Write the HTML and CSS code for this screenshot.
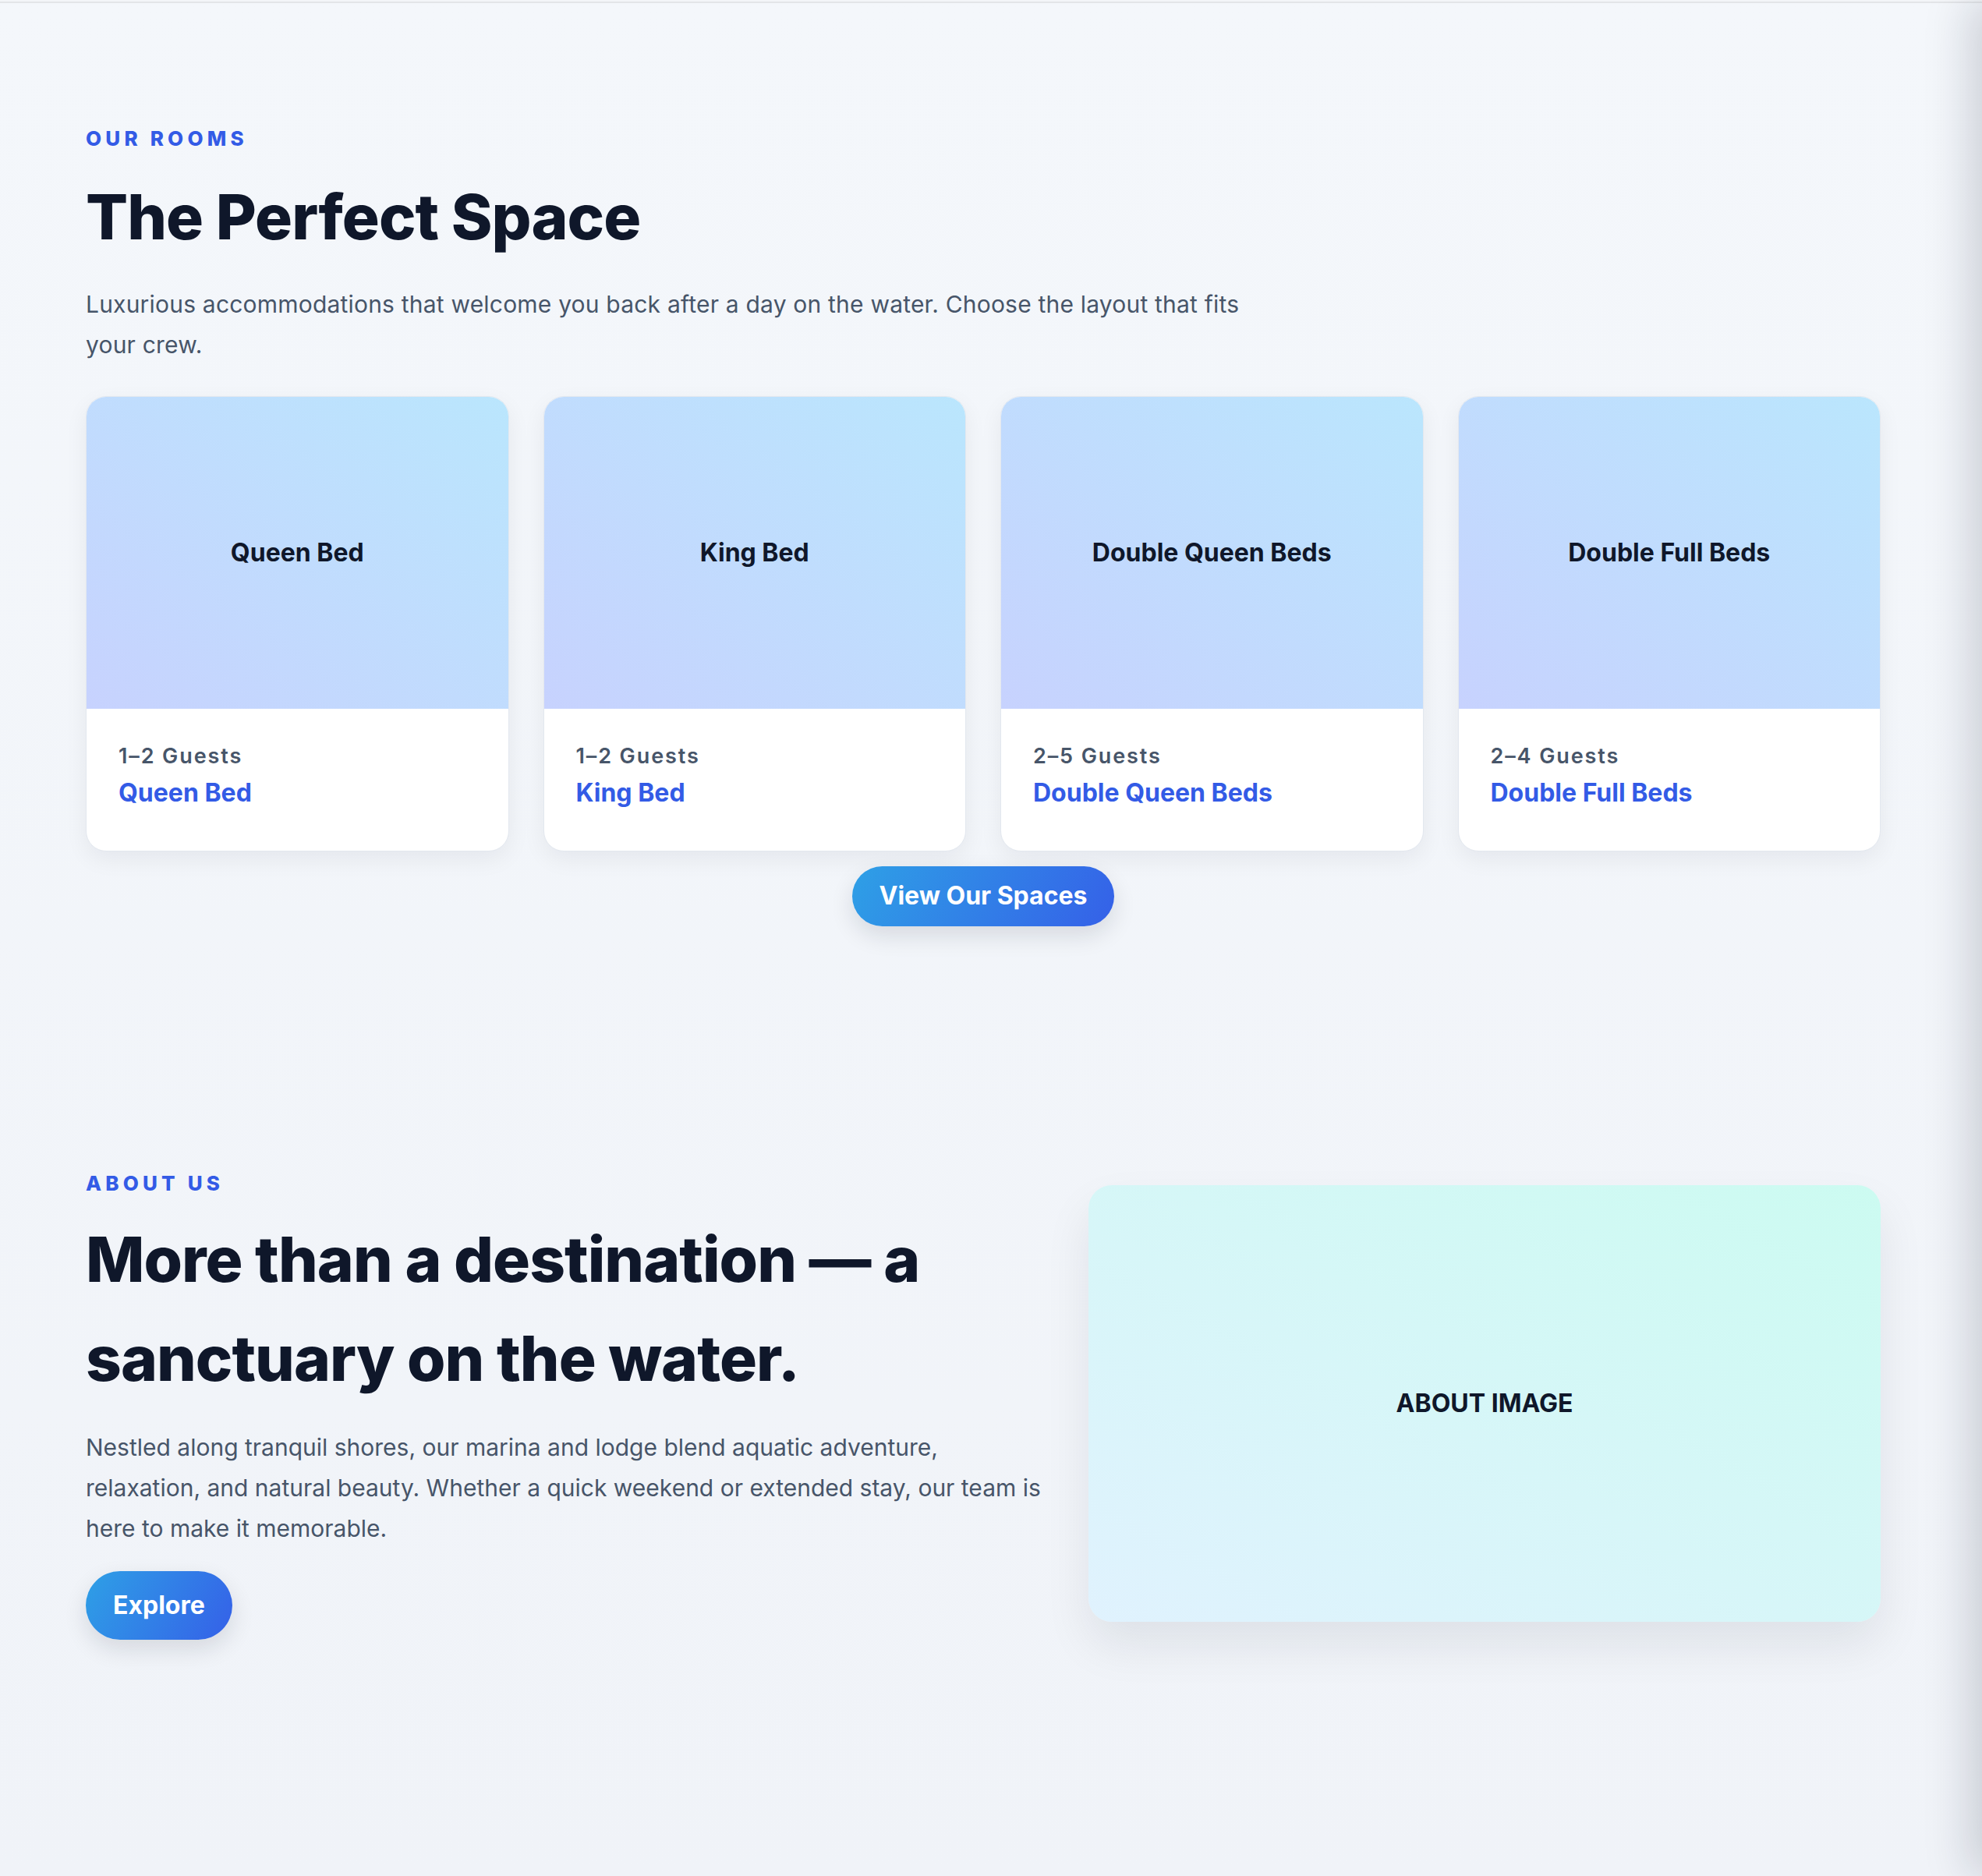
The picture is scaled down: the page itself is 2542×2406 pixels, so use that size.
FILE: index.html
```html
<!DOCTYPE html>
<html lang="en">
<head>
<meta charset="utf-8">
<title>Our Rooms</title>
<link rel="stylesheet" href="styles.css">
</head>
<body>
<div class="topline"></div>
<main class="page">
  <section class="rooms">
    <p class="eyebrow">OUR ROOMS</p>
    <h2 class="heading">The Perfect Space</h2>
    <p class="lead rooms-lead">Luxurious accommodations that welcome you back after a day on the water. Choose the layout that fits your crew.</p>
    <div class="room-grid">
      <article class="room-card">
        <div class="room-media"><span>Queen Bed</span></div>
        <div class="room-body">
          <p class="room-guests">1–2 Guests</p>
          <h3 class="room-title">Queen Bed</h3>
        </div>
      </article>
      <article class="room-card">
        <div class="room-media"><span>King Bed</span></div>
        <div class="room-body">
          <p class="room-guests">1–2 Guests</p>
          <h3 class="room-title">King Bed</h3>
        </div>
      </article>
      <article class="room-card">
        <div class="room-media"><span>Double Queen Beds</span></div>
        <div class="room-body">
          <p class="room-guests">2–5 Guests</p>
          <h3 class="room-title">Double Queen Beds</h3>
        </div>
      </article>
      <article class="room-card">
        <div class="room-media"><span>Double Full Beds</span></div>
        <div class="room-body">
          <p class="room-guests">2–4 Guests</p>
          <h3 class="room-title">Double Full Beds</h3>
        </div>
      </article>
    </div>
    <div class="center-row">
      <a class="btn btn-spaces" href="#">View Our Spaces</a>
    </div>
  </section>

  <section class="about">
    <div class="about-text">
      <p class="eyebrow">ABOUT US</p>
      <h2 class="heading">More than a destination — a sanctuary on the water.</h2>
      <p class="lead about-lead">Nestled along tranquil shores, our marina and lodge blend aquatic adventure, relaxation, and natural beauty. Whether a quick weekend or extended stay, our team is here to make it memorable.</p>
      <a class="btn btn-explore" href="#">Explore</a>
    </div>
    <div class="about-media"><span>ABOUT IMAGE</span></div>
  </section>
</main>
<div class="drawer"></div>
</body>
</html>
```

FILE: styles.css
```css
* { box-sizing: border-box; }

html, body {
  margin: 0;
  padding: 0;
}

body {
  font-family: Inter, "Noto Sans", "Liberation Sans", sans-serif;
  color: #0f172a;
  background: linear-gradient(180deg, #f4f7fb 0%, #f0f3f8 100%);
  min-height: 2406px;
  overflow: hidden;
}

.topline {
  height: 4px;
  border-top: 2px solid #f3f5f8;
  background: #e3e5e8;
}

.page {
  padding: 0 130px 0 110px;
}

.eyebrow {
  margin: 0;
  font-size: 26px;
  line-height: 1.6;
  font-weight: 800;
  letter-spacing: 0.2em;
  color: #335be6;
}

.heading {
  margin: 15px 0 0;
  font-size: 80px;
  line-height: 127px;
  font-weight: 800;
  letter-spacing: -0.012em;
  color: #0f172a;
}

.lead {
  margin: 23px 0 0;
  font-size: 30px;
  line-height: 52px;
  color: #475569;
  max-width: 1510px;
}

.rooms-lead {
  letter-spacing: 0.2px;
  max-width: 1520px;
}

.rooms {
  padding-top: 153px;
  padding-bottom: 155px;
}

.room-grid {
  margin-top: 40px;
  display: grid;
  grid-template-columns: repeat(4, minmax(0, 1fr));
  gap: 44px;
}

.room-card {
  background: #ffffff;
  border: 1px solid #e3e8ef;
  border-radius: 26px;
  overflow: hidden;
  box-shadow: 0 10px 30px rgba(15, 23, 42, 0.06);
}

.room-media {
  height: 400px;
  display: flex;
  align-items: center;
  justify-content: center;
  background: linear-gradient(to top right, #c7d2fe 0%, #bae6fd 100%);
  font-size: 32px;
  font-weight: 700;
  color: #0f172a;
}

.room-body {
  padding: 41px 41px 53px;
}

.room-guests {
  margin: 0;
  font-size: 27px;
  line-height: 39px;
  font-weight: 600;
  letter-spacing: 0.07em;
  color: #475569;
}

.room-title {
  margin: 6px 0 0;
  font-size: 32px;
  line-height: 43px;
  font-weight: 700;
  color: #335be6;
}

.center-row {
  margin-top: 19px;
  display: flex;
  justify-content: center;
}

.btn {
  display: inline-block;
  text-decoration: none;
  color: #ffffff;
  font-size: 32px;
  line-height: 38px;
  font-weight: 700;
  border-radius: 999px;
  background: linear-gradient(120deg, #2ea0e6 0%, #3560e8 100%);
  box-shadow: 0 12px 30px rgba(15, 23, 42, 0.12);
}

.btn-spaces {
  padding: 19.5px 35px;
}

.btn-explore {
  margin-top: 29px;
  padding: 25px 35px;
}

.about {
  padding-top: 154px;
  padding-bottom: 300px;
  display: grid;
  grid-template-columns: minmax(0, 1242fr) minmax(0, 1016fr);
  gap: 44px;
  align-items: center;
}

.about-lead {
  margin-top: 25px;
}

.about .heading {
  margin-top: 13px;
}

.about-media {
  height: 560px;
  border-radius: 30px;
  background: linear-gradient(to top right, #e0f2fe 0%, #ccfbf1 100%);
  box-shadow: 0 30px 60px rgba(15, 23, 42, 0.08);
  display: flex;
  align-items: center;
  justify-content: center;
  font-size: 32px;
  font-weight: 700;
  color: #0f172a;
}

.drawer {
  position: fixed;
  top: 0;
  left: 100%;
  width: 300px;
  height: 100vh;
  background: #ffffff;
  box-shadow: -14px 0 56px rgba(15, 23, 42, 0.18);
}
```
